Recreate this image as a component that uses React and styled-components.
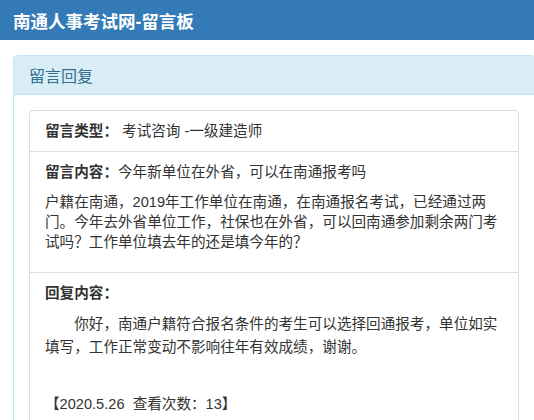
import React from 'react'
import styled, { createGlobalStyle } from 'styled-components'

const GlobalStyle = createGlobalStyle`
  body {
    margin: 0;
    overflow-x: hidden;
    background: #fff;
    font-family: "Liberation Sans", "Noto Sans CJK SC", sans-serif;
    color: #333;
  }
`

const Header = styled.div`
  height: 40px;
  background-color: #337ab7;
  padding-left: 13px;
  display: flex;
  align-items: center;
`

const SiteTitle = styled.h1`
  margin: 0;
  font-size: 17.5px;
  font-weight: 700;
  color: #fff;
`

const Main = styled.div`
  padding: 15px 0 0 13px;
`

const Panel = styled.div`
  width: 522px;
  box-sizing: border-box;
  border: 1px solid #bce8f1;
  border-radius: 4px;
`

const PanelHeading = styled.div`
  height: 39px;
  box-sizing: border-box;
  padding: 0 15px;
  display: flex;
  align-items: center;
  background-color: #d9edf7;
  border-bottom: 1px solid #bce8f1;
  border-radius: 3px 3px 0 0;
  color: #31708f;
  font-size: 16px;
`

const PanelBody = styled.div`
  padding: 15px;
`

const Card = styled.div`
  border: 1px solid #ddd;
  border-radius: 4px;
  font-size: 14.6px;
`

const Row = styled.div`
  padding: 10px 18px 10px 15px;
  & + & {
    border-top: 1px solid #ddd;
  }
`

const Line = styled.p`
  margin: 0 0 ${(props) => props.gap || 0}px;
  line-height: ${(props) => props.lh || 20}px;
  text-indent: ${(props) => props.indent ? '2em' : '0'};
`

const Label = styled.b`
  font-weight: 700;
`

const Stamp = styled.p`
  margin: 35px 0 20px;
  line-height: 20px;
`

export default function App() {
  return (
    <>
      <GlobalStyle />
      <Header>
        <SiteTitle>南通人事考试网-留言板</SiteTitle>
      </Header>
      <Main>
        <Panel>
          <PanelHeading>留言回复</PanelHeading>
          <PanelBody>
            <Card>
              <Row>
                <Line>
                  <Label>留言类型：</Label> 考试咨询 -一级建造师
                </Line>
              </Row>
              <Row>
                <Line gap={10}>
                  <Label>留言内容：</Label>今年新单位在外省，可以在南通报考吗
                </Line>
                <Line gap={10}>
                  户籍在南通，2019年工作单位在南通，在南通报名考试，已经通过两门。今年去外省单位工作，社保也在外省，可以回南通参加剩余两门考试吗？工作单位填去年的还是填今年的？
                </Line>
              </Row>
              <Row>
                <Line gap={10}>
                  <Label>回复内容：</Label>
                </Line>
                <Line lh={23} indent>
                  你好，南通户籍符合报名条件的考生可以选择回通报考，单位如实填写，工作正常变动不影响往年有效成绩，谢谢。
                </Line>
                <Stamp>【2020.5.26&nbsp; 查看次数：13】</Stamp>
              </Row>
            </Card>
          </PanelBody>
        </Panel>
      </Main>
    </>
  )
}
